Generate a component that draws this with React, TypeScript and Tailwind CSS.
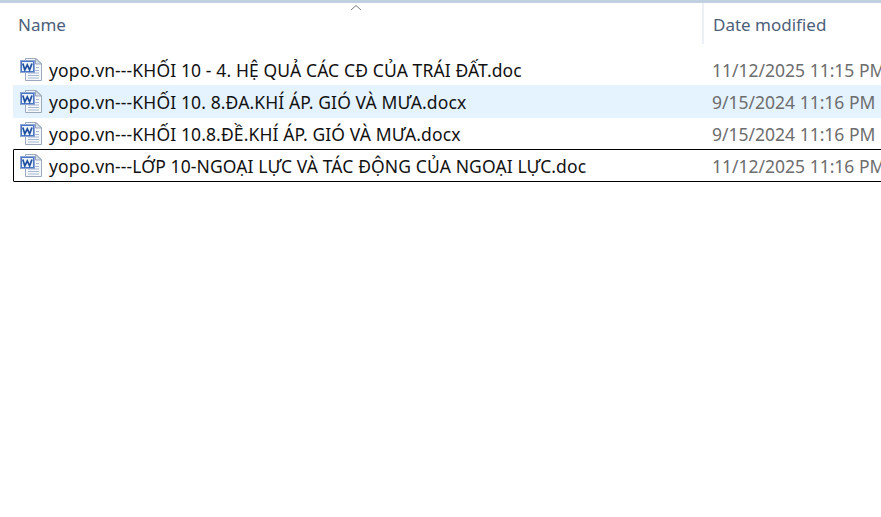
const rows = [
  { name: "yopo.vn---KHỐI 10 - 4. HỆ QUẢ CÁC CĐ CỦA TRÁI ĐẤT.doc", date: "11/12/2025 11:15 PM", state: "" },
  { name: "yopo.vn---KHỐI 10. 8.ĐA.KHÍ ÁP. GIÓ VÀ MƯA.docx", date: "9/15/2024 11:16 PM", state: "hover" },
  { name: "yopo.vn---KHỐI 10.8.ĐỀ.KHÍ ÁP. GIÓ VÀ MƯA.docx", date: "9/15/2024 11:16 PM", state: "" },
  { name: "yopo.vn---LỚP 10-NGOẠI LỰC VÀ TÁC ĐỘNG CỦA NGOẠI LỰC.doc", date: "11/12/2025 11:16 PM", state: "focus" },
];

function WordIcon() {
  return (
    <svg width="24" height="24" viewBox="0 0 24 24" className="shrink-0">
      <path d="M6.5 0.5H17L22.5 5.5V22.5H6.5Z" fill="#f4f7fb" stroke="#9aa9bd" />
      <path d="M16.5 0.5V6H22.5Z" fill="#d5deea" stroke="#9aa9bd" />
      <path d="M9 12.5H20M9 15H20M9 17.5H20M9 20H20M17 9.5H20" stroke="#a9b9d2" />
      <rect x="1.5" y="2.5" width="14" height="12" fill="#4a78c8" stroke="#8ea6cf" />
      <rect x="3" y="4" width="11" height="9" fill="#fff" opacity="0.9" />
      <path d="M3.8 5.5L5.8 11.8L8.3 7L10.6 11.8L13 5.5" fill="none" stroke="#1f4f9f" strokeWidth="1.7" />
    </svg>
  );
}

function Row({ name, date, state }: { name: string; date: string; state: string }) {
  const bg = state === "hover" ? "bg-[#e5f3ff]" : "";
  const border = state === "focus" ? "border-[#000000]" : "border-transparent";
  return (
    <div className={`flex h-[33px] w-[900px] items-center ml-[13px] border rounded-[1px] mb-[-1px] ${bg} ${border}`}>
      <div className="w-[689px] shrink-0 flex items-center gap-[6px] pl-[5px] overflow-hidden">
        <WordIcon />
        <span className="pt-[2px] text-[17.5px] tracking-[0.12px] text-[#111111] whitespace-nowrap">{name}</span>
      </div>
      <span className="pt-[2px] text-[17.5px] text-[#6d6d6d] whitespace-nowrap ml-[9px]">{date}</span>
    </div>
  );
}

export default function App() {
  return (
    <div className="w-[881px] h-[517px] bg-white overflow-hidden relative font-['Noto_Sans','Open_Sans',sans-serif]">
      <div className="h-[3px] bg-[#c0d0e0]" />
      <div className="flex h-[41px] relative">
        <div className="w-[702px] pl-[18px] pt-[10px] text-[17px] text-[#4c607a] leading-[24px]">Name</div>
        <div className="border-l-2 border-[#eceff3] pl-[9px] pt-[10px] text-[17px] text-[#4c607a] leading-[24px] whitespace-nowrap">Date modified</div>
        <svg width="12" height="7" viewBox="0 0 12 7" className="absolute left-[350px] top-[1px]">
          <path d="M1 6L6 1.5L11 6" fill="none" stroke="#7a7a7a" />
        </svg>
      </div>
      <div className="pt-[9px]">
        {rows.map((r) => (
          <Row key={r.name} {...r} />
        ))}
      </div>
    </div>
  );
}
